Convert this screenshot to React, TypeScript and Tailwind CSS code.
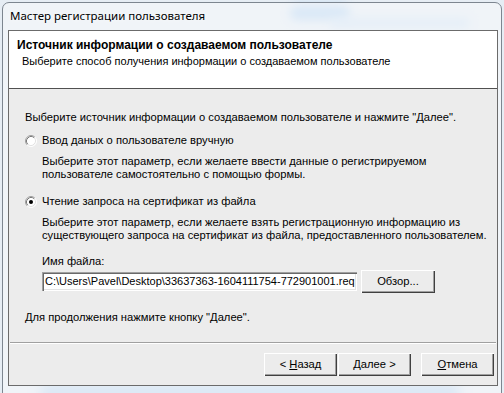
import type { ReactNode } from 'react';

function Radio({ checked = false }: { checked?: boolean }) {
  return (
    <svg width="12" height="12" viewBox="0 0 12 12" className="shrink-0">
      <circle cx="6" cy="6" r="5" fill="#fff" />
      <path d="M2.11 9.89A5.5 5.5 0 0 1 9.89 2.11" fill="none" stroke="#a0a0a0" />
      <path d="M9.89 2.11A5.5 5.5 0 0 1 2.11 9.89" fill="none" stroke="#ffffff" />
      <path d="M2.82 9.18A4.5 4.5 0 0 1 9.18 2.82" fill="none" stroke="#7a7a7a" />
      <path d="M9.18 2.82A4.5 4.5 0 0 1 2.82 9.18" fill="none" stroke="#e3e3e3" />
      {checked && <circle cx="6" cy="6" r="2" fill="#000" />}
    </svg>
  );
}

function Btn({ children, className = '' }: { children: ReactNode; className?: string }) {
  return (
    <button
      className={`flex h-[23px] w-[73px] shrink-0 items-center justify-center bg-[#ececec] text-[11.2px] text-black shadow-[inset_1px_1px_0_#fff,inset_-1px_-1px_0_#404040,inset_-2px_-2px_0_#a0a0a0] ${className}`}
    >
      {children}
    </button>
  );
}

export default function App() {
  return (
    <div className="relative h-[393px] w-[504px] overflow-hidden bg-[#e6edf4] font-['Liberation_Sans',Arial,sans-serif]">
      {/* blurred desktop behind the glass frame */}
      <div className="absolute left-[290px] top-[6px] h-[14px] w-[60px] rounded-full bg-[#9cc6f0] blur-[5px]" />
      <div className="absolute left-[330px] top-[18px] h-[10px] w-[140px] rounded-full bg-[#c4dcf4] blur-[5px]" />
      <div className="absolute left-[40px] top-[386px] h-[12px] w-[420px] rounded-full bg-[#8fbdea] blur-[6px]" />

      {/* window */}
      <div className="relative ml-[2px] mt-[2px] h-[400px] w-[500px] rounded-t-[7px] border border-[#7d8690] bg-[#f4f7fa]/70 pl-[5px]">
        <div className="flex h-[27px] items-center pb-[1px] pl-[2px] font-['Noto_Sans',sans-serif] text-[11.5px] text-black [text-shadow:0_0_6px_#fff]">
          Мастер регистрации пользователя
        </div>

        {/* client area */}
        <div className="flex h-[356px] w-[490px] flex-col whitespace-nowrap border border-[#6b6b6b] bg-[#ececec] text-[11.2px] text-black">
          <div className="h-[58px] shrink-0 border-b border-[#505050] bg-white pt-[8px]">
            <div className="pl-[8px] text-[12px] font-bold leading-[13px]">
              Источник информации о создаваемом пользователе
            </div>
            <div className="mt-[3px] pl-[13px] text-[11px] leading-[13px]">
              Выберите способ получения информации о создаваемом пользователе
            </div>
          </div>

          <div className="flex flex-1 flex-col px-[16px] leading-[13px]">
            <div className="mt-[22px]">
              Выберите источник информации о создаваемом пользователе и нажмите "Далее".
            </div>

            <div className="mt-[10px] flex h-[13px] items-center gap-[5px]">
              <Radio />
              <span>Ввод даных о пользователе вручную</span>
            </div>
            <div className="mt-[8px] pl-[17px]">
              Выберите этот параметр, если желаете ввести данные о регистрируемом
              <br />
              пользователе самостоятельно с помощью формы.
            </div>

            <div className="mt-[14px] flex h-[13px] items-center gap-[5px]">
              <Radio checked />
              <span>Чтение запроса на сертификат из файла</span>
            </div>
            <div className="mt-[8px] pl-[17px]">
              Выберите этот параметр, если желаете взять регистрационную информацию из
              <br />
              существующего запроса на сертификат из файла, предоставленного пользователем.
            </div>

            <div className="mt-[13px] pl-[17px]">Имя файла:</div>
            <div className="mt-[2px] flex h-[22px] items-center pl-[17px]">
              <div className="flex h-[19px] w-[315px] items-center overflow-hidden bg-white pl-[3px] text-[11px] shadow-[inset_1px_1px_0_#a0a0a0,inset_2px_2px_0_#696969,inset_-1px_-1px_0_#fff,inset_-2px_-2px_0_#e3e3e3]">
                C:\Users\Pavel\Desktop\33637363-1604111754-772901001.req
              </div>
              <Btn className="ml-[4px] h-[22px] w-[74px]">Обзор...</Btn>
            </div>

            <div className="mt-[19px]">Для продолжения нажмите кнопку "Далее".</div>
          </div>

          <div className="mx-[1px] h-[2px] shrink-0 border-t border-b border-t-[#a0a0a0] border-b-white" />
          <div className="flex h-[41px] shrink-0 items-center justify-end pr-[3px]">
            <Btn>
              &lt;&nbsp;<span className="underline">Н</span>азад
            </Btn>
            <Btn className="ml-[1px]">
              <span className="underline">Д</span>алее&nbsp;&gt;
            </Btn>
            <Btn className="ml-[10px]">
              <span className="underline">О</span>тмена
            </Btn>
          </div>
        </div>
      </div>
    </div>
  );
}
